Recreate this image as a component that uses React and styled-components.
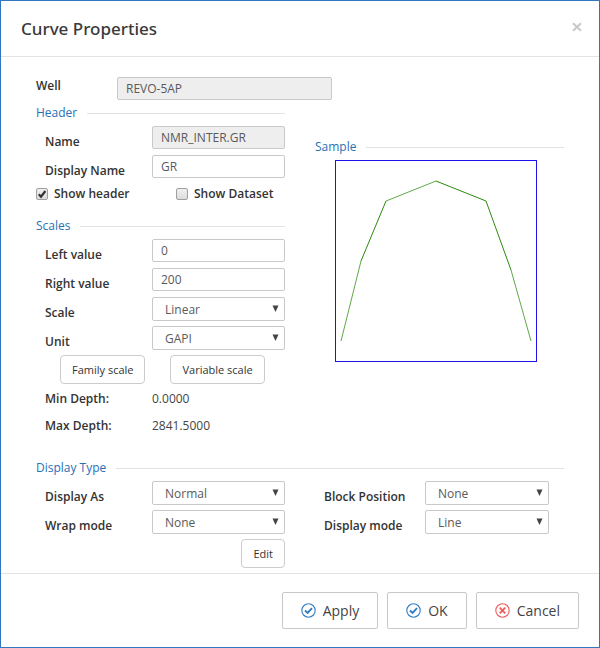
import React, { useId } from "react";
import styled, { createGlobalStyle } from "styled-components";

const GlobalStyle = createGlobalStyle`
  *, *::before, *::after { box-sizing: border-box; }
  body { margin: 0; background: #fff; }
  body, input, select, button {
    font-family: "Open Sans", "Noto Sans", sans-serif;
    font-size: 12px;
    line-height: 16px;
    color: #333;
  }
`;

const Dialog = styled.div`
  border: 1px solid #2f78bd;
  background: #fff;
`;

const DialogHeader = styled.header`
  display: flex;
  justify-content: space-between;
  align-items: flex-start;
  height: 56px;
  padding: 16px 17px 0 20px;
  border-bottom: 1px solid #e3e3e3;
`;

const Title = styled.h1`
  margin: 0;
  font-family: "Noto Sans", "Open Sans", sans-serif;
  font-size: 17px;
  line-height: 24px;
  font-weight: 500;
  color: #3a3a3a;
`;

const CloseButton = styled.button`
  display: grid;
  place-items: center;
  width: 10px;
  height: 20px;
  padding: 0;
  border: 0;
  background: none;
  color: #c8c8c8;
`;

const Body = styled.main`
  padding: 20px 35px 5px;
`;

const WellRow = styled.div`
  display: grid;
  grid-template-columns: 81px minmax(0, 215px);
  align-items: start;
`;

const Columns = styled.div`
  display: grid;
  grid-template-columns: 1fr 1fr;
  column-gap: 30px;
`;

const LeftColumn = styled.div`
  min-width: 0;
`;

const RightColumn = styled.div`
  min-width: 0;
  padding-top: 34px;
`;

const SectionTitle = styled.h2`
  display: flex;
  align-items: center;
  gap: 10px;
  height: 26px;
  margin: 0;
  padding-bottom: 1px;
  font-size: 12px;
  line-height: 16px;
  font-weight: 500;
  color: #2871b5;

  &::after {
    content: "";
    flex: 1;
    height: 1px;
    margin-top: 2px;
    background: #e3e3e3;
  }
`;

const Fields = styled.div`
  display: grid;
  align-content: start;
  row-gap: 5px;
  padding-left: 9px;
  padding-right: ${({ $inset }) => ($inset ? "15px" : "0")};
`;

const FieldRow = styled.div`
  display: grid;
  grid-template-columns: ${({ $narrow }) => ($narrow ? "101px" : "107px")} minmax(0, 1fr);
  align-items: start;
  min-height: 24px;
`;

const Label = styled.label`
  padding-top: ${({ $raised }) => ($raised ? "1px" : "8px")};
  font-weight: 600;
  line-height: 16px;
  white-space: nowrap;
`;

const TextInput = styled.input`
  width: 100%;
  height: 23px;
  padding: 0 8px;
  border: 1px solid #c9c9c9;
  border-radius: 2px;
  background: #fff;
  color: #5a5a5a;

  &:read-only { background: #eee; }
`;

const SelectWrap = styled.div`
  position: relative;
`;

const Select = styled.select`
  appearance: none;
  display: block;
  width: 100%;
  height: 24px;
  padding: 1px 24px 0 12px;
  border: 1px solid #c9c9c9;
  border-radius: 2px;
  background: #fff;
  color: #5a5a5a;
`;

const Arrow = styled.svg`
  position: absolute;
  right: 6px;
  top: 8px;
  pointer-events: none;
`;

const Checks = styled.div`
  display: grid;
  grid-template-columns: 140px 1fr;
  align-items: center;
  height: 20px;
  margin: 5px 0 9px;
`;

const CheckLabel = styled.label`
  display: flex;
  align-items: center;
  gap: 6px;
  font-weight: 600;
`;

const CheckBoxWrap = styled.span`
  display: grid;
  width: 12px;
  height: 12px;

  & > * { grid-area: 1 / 1; }
`;

const CheckBox = styled.input`
  appearance: none;
  width: 12px;
  height: 12px;
  margin: 0;
  border: 1px solid #a0a0a0;
  border-radius: 2px;
  background: linear-gradient(#f0f0f0, #dcdcdc);

  & + svg { visibility: hidden; pointer-events: none; }
  &:checked + svg { visibility: visible; }
`;

const ScaleButtons = styled.div`
  display: flex;
  gap: 25px;
  padding: 5px 24px 1px;
`;

const SmallButton = styled.button`
  height: 29px;
  padding: 0 11px;
  border: 1px solid #ccc;
  border-radius: 4px;
  background: #fff;
  font-size: 11px;
  white-space: nowrap;
`;

const EditRow = styled.div`
  display: flex;
  justify-content: flex-end;
  padding-top: 5px;
`;

const Depths = styled.dl`
  display: grid;
  grid-template-columns: 107px 1fr;
  grid-auto-rows: 27px;
  align-items: center;
  margin: 0 0 16px;
  padding-left: 9px;
`;

const DepthName = styled.dt`
  font-weight: 600;
`;

const DepthValue = styled.dd`
  margin: 0;
  color: #444;
`;

const Sample = styled.svg`
  display: block;
  margin: 0 0 0 20px;
  border: 1px solid #1a10f0;
`;

const DialogFooter = styled.footer`
  display: flex;
  justify-content: flex-end;
  gap: 9px;
  padding: 18px 20px;
  border-top: 1px solid #e3e3e3;
`;

const ActionButton = styled.button`
  display: flex;
  align-items: center;
  gap: 7px;
  height: 37px;
  padding: 0 18px;
  border: 1px solid #c9c9c9;
  border-radius: 2px;
  background: #fff;
  font-size: 14px;
  line-height: 20px;
  color: #444;
`;

function TextField({ label, value, readOnly }) {
  const id = useId();
  return (
    <FieldRow>
      <Label htmlFor={id}>{label}</Label>
      <TextInput id={id} defaultValue={value} readOnly={readOnly} />
    </FieldRow>
  );
}

function SelectField({ label, options, narrow }) {
  const id = useId();
  return (
    <FieldRow $narrow={narrow}>
      <Label htmlFor={id}>{label}</Label>
      <SelectWrap>
        <Select id={id}>
          {options.map((option) => (
            <option key={option}>{option}</option>
          ))}
        </Select>
        <Arrow width="7" height="7" viewBox="0 0 7 7" aria-hidden="true">
          <path d="M.5.5h6L3.5 7z" fill="#444" />
        </Arrow>
      </SelectWrap>
    </FieldRow>
  );
}

function CheckField({ label, checked }) {
  return (
    <CheckLabel>
      <CheckBoxWrap>
        <CheckBox type="checkbox" defaultChecked={checked} />
        <svg width="12" height="12" viewBox="0 0 12 12" aria-hidden="true">
          <path d="M2.8 6.2 5 8.7 9.4 3" fill="none" stroke="#333" strokeWidth="2.2" />
        </svg>
      </CheckBoxWrap>
      {label}
    </CheckLabel>
  );
}

function StatusIcon({ kind }) {
  const cancel = kind === "cancel";
  return (
    <svg
      width="15"
      height="15"
      viewBox="0 0 15 15"
      fill="none"
      stroke={cancel ? "#ee5d5d" : "#2f7dc6"}
      aria-hidden="true"
    >
      <circle cx="7.5" cy="7.5" r="6.7" strokeWidth="1.1" />
      {cancel ? (
        <path d="M4.7 4.7l5.6 5.6M10.3 4.7l-5.6 5.6" strokeWidth="1.8" />
      ) : (
        <path d="M4 7.5 6.6 10 11 5.2" strokeWidth="1.9" />
      )}
    </svg>
  );
}

export default function App() {
  const wellId = useId();
  return (
    <>
      <GlobalStyle />
      <Dialog role="dialog" aria-labelledby="dialog-title">
        <DialogHeader>
          <Title id="dialog-title">Curve Properties</Title>
          <CloseButton type="button" aria-label="Close">
            <svg width="10" height="10" viewBox="0 0 10 10" aria-hidden="true">
              <path d="M1 1.2l8 7.6M9 1.2 1 8.8" stroke="currentColor" strokeWidth="2" />
            </svg>
          </CloseButton>
        </DialogHeader>

        <Body>
          <WellRow>
            <Label $raised htmlFor={wellId}>Well</Label>
            <TextInput id={wellId} defaultValue="REVO-5AP" readOnly />
          </WellRow>

          <Columns>
            <LeftColumn>
              <SectionTitle>Header</SectionTitle>
              <Fields>
                <TextField label="Name" value="NMR_INTER.GR" readOnly />
                <TextField label="Display Name" value="GR" />
              </Fields>
              <Checks>
                <CheckField label="Show header" checked />
                <CheckField label="Show Dataset" />
              </Checks>

              <SectionTitle>Scales</SectionTitle>
              <Fields>
                <TextField label="Left value" value="0" />
                <TextField label="Right value" value="200" />
                <SelectField label="Scale" options={["Linear"]} />
                <SelectField label="Unit" options={["GAPI"]} />
              </Fields>
              <ScaleButtons>
                <SmallButton type="button">Family scale</SmallButton>
                <SmallButton type="button">Variable scale</SmallButton>
              </ScaleButtons>
              <Depths>
                <DepthName>Min Depth:</DepthName>
                <DepthValue>0.0000</DepthValue>
                <DepthName>Max Depth:</DepthName>
                <DepthValue>2841.5000</DepthValue>
              </Depths>
            </LeftColumn>

            <RightColumn>
              <SectionTitle>Sample</SectionTitle>
              <Sample width="202" height="202" viewBox="0 0 200 200" role="img" aria-label="Curve sample">
                <g fill="none" stroke="#2b8a0c">
                  <path d="M5 180 25 100M50 40 100 20M175 109 195 180" opacity="0.75" />
                  <path d="M25 100 50 40M100 20 150 40 175 109" />
                </g>
              </Sample>
            </RightColumn>
          </Columns>

          <SectionTitle>Display Type</SectionTitle>
          <Columns>
            <LeftColumn>
              <Fields>
                <SelectField label="Display As" options={["Normal"]} />
                <SelectField label="Wrap mode" options={["None"]} />
              </Fields>
              <EditRow>
                <SmallButton type="button">Edit</SmallButton>
              </EditRow>
            </LeftColumn>
            <Fields $inset>
              <SelectField narrow label="Block Position" options={["None"]} />
              <SelectField narrow label="Display mode" options={["Line"]} />
            </Fields>
          </Columns>
        </Body>

        <DialogFooter>
          <ActionButton type="button"><StatusIcon kind="ok" />Apply</ActionButton>
          <ActionButton type="button"><StatusIcon kind="ok" />OK</ActionButton>
          <ActionButton type="button"><StatusIcon kind="cancel" />Cancel</ActionButton>
        </DialogFooter>
      </Dialog>
    </>
  );
}
